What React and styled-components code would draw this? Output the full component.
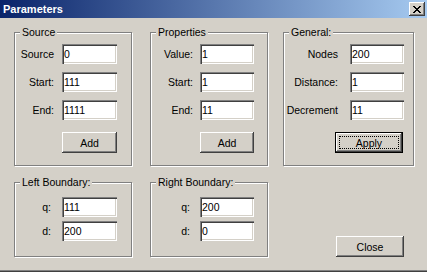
import styled, { createGlobalStyle } from "styled-components";

const GlobalStyle = createGlobalStyle`
  html, body {
    margin: 0;
    padding: 0;
    background: #d4d0c8;
  }
  body {
    font-family: "Liberation Sans", Arial, sans-serif;
    font-size: 10px;
    color: #000;
  }
`;

const Window = styled.div`
  width: 427px;
  height: 272px;
  box-sizing: border-box;
  background: #d4d0c8;
  border-bottom: 1px solid #404040;
  box-shadow: inset 0 -1px 0 #808080;
  display: flex;
  flex-direction: column;
`;

const TitleBar = styled.div`
  height: 18px;
  display: flex;
  align-items: center;
  padding-left: 3px;
  background: linear-gradient(to right, #0a246a, #a6caf0);
`;

const Title = styled.span`
  color: #fff;
  font-weight: bold;
  font-size: 11px;
  line-height: 13px;
  margin-top: 1px;
`;

const CaptionButton = styled.button`
  margin-left: auto;
  margin-right: 2px;
  width: 16px;
  height: 14px;
  padding: 0;
  border: none;
  background: #d4d0c8;
  box-shadow: inset -1px -1px #404040, inset 1px 1px #fff,
    inset -2px -2px #808080, inset 2px 2px #d4d0c8;
  display: flex;
  align-items: center;
  justify-content: center;
`;

const Body = styled.div`
  padding: 14px 0 0 14px;
  display: flex;
  flex-direction: column;
`;

const Row = styled.div`
  display: flex;
  margin-top: ${(p) => p.$mt || 0}px;
`;

const Group = styled.div`
  position: relative;
  box-sizing: border-box;
  width: ${(p) => p.$w}px;
  height: ${(p) => p.$h}px;
  margin-left: ${(p) => p.$ml || 0}px;
  padding-top: ${(p) => p.$pt}px;
  border: 1px solid #808080;
  box-shadow: inset 1px 1px 0 #fff, 1px 1px 0 #fff;
  display: flex;
  flex-direction: column;
`;

const Legend = styled.span`
  position: absolute;
  top: -7px;
  left: 5px;
  padding: 0 2px;
  font-size: 10.5px;
  line-height: 13px;
  background: #d4d0c8;
  white-space: nowrap;
`;

const Fields = styled.div`
  display: flex;
  flex-direction: column;
  gap: ${(p) => p.$gap}px;
`;

const Field = styled.div`
  display: flex;
  align-items: center;
  height: 20px;
`;

const Label = styled.label`
  box-sizing: border-box;
  width: ${(p) => p.$w}px;
  padding-right: ${(p) => p.$pr}px;
  text-align: right;
  white-space: nowrap;
  font-size: 10.5px;
  line-height: 13px;
`;

const Input = styled.input`
  box-sizing: border-box;
  width: ${(p) => p.$w || 55}px;
  height: 20px;
  margin: 0;
  padding: 0 2px;
  border: none;
  outline: none;
  background: #fff;
  font-family: inherit;
  font-size: 10.5px;
  color: #000;
  box-shadow: inset 1px 1px #808080, inset 2px 2px #404040,
    inset -1px -1px #fff, inset -2px -2px #d4d0c8;
`;

const Button = styled.button`
  position: relative;
  box-sizing: border-box;
  width: ${(p) => p.$w}px;
  height: 21px;
  margin: ${(p) => p.$mt || 0}px 0 0 ${(p) => p.$ml || 0}px;
  padding: 0;
  font-family: inherit;
  font-size: 10.5px;
  color: #000;
  background: #d4d0c8;
  border: ${(p) => (p.$default ? "1px solid #000" : "none")};
  box-shadow: inset -1px -1px #404040, inset 1px 1px #fff,
    inset -2px -2px #808080, inset 2px 2px #d4d0c8;

  ${(p) =>
    p.$focus &&
    `
    &::after {
      content: "";
      position: absolute;
      inset: 3px;
      border: 1px dotted #000;
    }
  `}
`;

const Column = styled.div`
  width: ${(p) => p.$w}px;
  margin-left: ${(p) => p.$ml || 0}px;
  display: flex;
  flex-direction: column;
  justify-content: flex-end;
`;

function CloseGlyph() {
  return (
    <svg width="8" height="7" viewBox="0 0 8 7" shapeRendering="crispEdges">
      <path
        d="M0 0h2v1h-2zM6 0h2v1h-2zM1 1h2v1h-2zM5 1h2v1h-2zM2 2h4v1h-4zM3 3h2v1h-2zM2 4h4v1h-4zM1 5h2v1h-2zM5 5h2v1h-2zM0 6h2v1h-2zM6 6h2v1h-2z"
        fill="#000"
      />
    </svg>
  );
}

const sourceFields = [
  ["Source", "0"],
  ["Start:", "111"],
  ["End:", "1111"],
];

const propertyFields = [
  ["Value:", "1"],
  ["Start:", "1"],
  ["End:", "11"],
];

const generalFields = [
  ["Nodes", "200"],
  ["Distance:", "1"],
  ["Decrement", "11"],
];

function FieldList({ items, lw, pr, iw, gap }) {
  return (
    <Fields $gap={gap}>
      {items.map(([label, value]) => (
        <Field key={label}>
          <Label $w={lw} $pr={pr}>
            {label}
          </Label>
          <Input $w={iw} defaultValue={value} />
        </Field>
      ))}
    </Fields>
  );
}

export default function App() {
  return (
    <>
      <GlobalStyle />
      <Window>
        <TitleBar>
          <Title>Parameters</Title>
          <CaptionButton aria-label="Close">
            <CloseGlyph />
          </CaptionButton>
        </TitleBar>
        <Body>
          <Row>
            <Group $w={118} $h={134} $pt={11}>
              <Legend>Source</Legend>
              <FieldList items={sourceFields} lw={47} pr={8} iw={55} gap={8} />
              <Button $w={55} $ml={47} $mt={12}>
                Add
              </Button>
            </Group>
            <Group $w={118} $h={134} $pt={11} $ml={18}>
              <Legend>Properties</Legend>
              <FieldList items={propertyFields} lw={49} pr={7} iw={54} gap={8} />
              <Button $w={54} $ml={49} $mt={12}>
                Add
              </Button>
            </Group>
            <Group $w={131} $h={134} $pt={11} $ml={15}>
              <Legend>General:</Legend>
              <FieldList items={generalFields} lw={66} pr={12} iw={54} gap={8} />
              <Button $w={68} $ml={51} $mt={12} $default $focus>
                Apply
              </Button>
            </Group>
          </Row>
          <Row $mt={16}>
            <Group $w={118} $h={75} $pt={14}>
              <Legend>Left Boundary:</Legend>
              <FieldList
                items={[
                  ["q:", "111"],
                  ["d:", "200"],
                ]}
                lw={47}
                pr={11}
                iw={55}
                gap={4}
              />
            </Group>
            <Group $w={118} $h={75} $pt={14} $ml={18}>
              <Legend>Right Boundary:</Legend>
              <FieldList
                items={[
                  ["q:", "200"],
                  ["d:", "0"],
                ]}
                lw={49}
                pr={10}
                iw={54}
                gap={4}
              />
            </Group>
            <Column $w={131} $ml={15}>
              <Button $w={68} $ml={53}>
                Close
              </Button>
            </Column>
          </Row>
        </Body>
      </Window>
    </>
  );
}
